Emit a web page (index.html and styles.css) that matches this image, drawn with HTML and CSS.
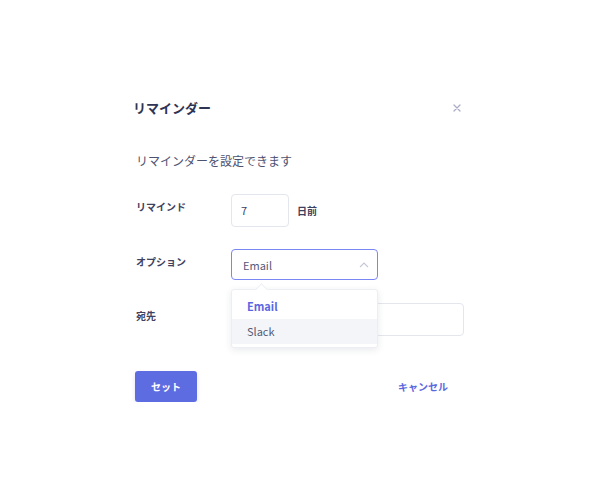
FILE: index.html
```html
<!DOCTYPE html>
<html lang="ja">
<head>
  <meta charset="UTF-8">
  <title>リマインダー</title>
  <link rel="stylesheet" href="styles.css">
</head>
<body>
  <div class="dialog">
    <div class="dialog-head">
      <h2 class="dialog-title">リマインダー</h2>
      <span class="close">
        <svg width="8" height="8" viewBox="0 0 8 8"><path d="M1 1L7 7M7 1L1 7" stroke="#a9adc8" stroke-width="1.3" stroke-linecap="round"/></svg>
      </span>
    </div>
    <p class="lead">リマインダーを設定できます</p>

    <div class="row row-first">
      <label class="label">リマインド</label>
      <div class="field">
        <div class="input input-days">7</div>
        <span class="unit">日前</span>
      </div>
    </div>

    <div class="row">
      <label class="label">オプション</label>
      <div class="field field-select">
        <div class="select">
          <span>Email</span>
          <svg width="10" height="6" viewBox="0 0 10 6"><path d="M1 5L5 1L9 5" fill="none" stroke="#c5c8d8" stroke-width="1.1"/></svg>
        </div>
        <div class="menu">
          <div class="menu-item active">Email</div>
          <div class="menu-item hover">Slack</div>
        </div>
      </div>
    </div>

    <div class="row row-last">
      <label class="label">宛先</label>
      <div class="field">
        <div class="input input-wide"></div>
      </div>
    </div>

    <div class="dialog-foot">
      <button class="btn-primary">セット</button>
      <button class="btn-link">キャンセル</button>
    </div>
  </div>
</body>
</html>
```

FILE: styles.css
```css
body {
  margin: 0;
  background: #ffffff;
  font-family: "Noto Sans CJK JP", "Noto Sans", sans-serif;
  color: #3b3f5c;
}
.dialog {
  width: 331px;
  margin-left: 133px;
  padding-top: 99px;
}
.dialog-head {
  display: flex;
  justify-content: space-between;
  align-items: center;
  height: 18px;
}
.dialog-title {
  margin: 0;
  font-size: 13px;
  line-height: 18px;
  font-weight: 700;
  color: #2f3454;
}
.close {
  display: flex;
  margin-right: 3px;
}
.lead {
  margin: 35px 0 0 3px;
  font-size: 12px;
  line-height: 18px;
  color: #4d5270;
}
.row {
  display: grid;
  grid-template-columns: 95px 1fr;
  margin-left: 3px;
  margin-top: 22px;
}
.row-first {
  margin-top: 24px;
}
.row-last {
  margin-top: 23px;
}
.label {
  font-size: 10px;
  line-height: 16px;
  font-weight: 700;
  color: #3e4260;
  padding-top: 5px;
}
.field {
  display: flex;
  align-items: center;
  gap: 8px;
}
.field-select {
  position: relative;
}
.input {
  box-sizing: border-box;
  height: 33px;
  border: 1px solid #e4e6ee;
  border-radius: 4px;
  background: #fff;
  font-size: 11px;
  line-height: 31px;
  padding-left: 9px;
  color: #3b3f5c;
}
.input-days {
  width: 58px;
}
.input-wide {
  width: 233px;
}
.unit {
  font-size: 10px;
  font-weight: 700;
  color: #3e4260;
}
.select {
  box-sizing: border-box;
  width: 147px;
  height: 31px;
  border: 1px solid #7a86f4;
  border-radius: 4px;
  display: flex;
  justify-content: space-between;
  align-items: center;
  padding: 0 8px 0 11px;
  font-size: 11px;
  color: #555a76;
}
.menu {
  position: absolute;
  top: 40px;
  left: 0;
  z-index: 2;
  box-sizing: border-box;
  width: 147px;
  padding: 4px 0 3px;
  background: #fff;
  border: 1px solid #eceef4;
  border-radius: 3px;
  box-shadow: 0 2px 7px rgba(40, 45, 80, 0.1);
}
.menu::before {
  content: "";
  position: absolute;
  top: -5px;
  left: 25px;
  width: 8px;
  height: 8px;
  background: #fff;
  border-left: 1px solid #eceef4;
  border-top: 1px solid #eceef4;
  transform: rotate(45deg);
}
.menu-item {
  height: 25px;
  line-height: 25px;
  padding-left: 15px;
  font-size: 11px;
  color: #555a76;
}
.menu-item.active {
  color: #5b67e0;
  font-weight: 700;
}
.menu-item.hover {
  background: #f4f5f8;
}
.dialog-foot {
  display: flex;
  justify-content: space-between;
  align-items: center;
  margin: 35px 0 0 2px;
}
.btn-primary {
  width: 62px;
  height: 31px;
  border: none;
  border-radius: 3px;
  background: #5e6ce2;
  color: #fff;
  font-family: inherit;
  font-size: 10px;
  font-weight: 700;
  box-shadow: 0 2px 4px rgba(94, 108, 226, 0.2);
}
.btn-link {
  border: none;
  background: none;
  padding: 0 16px;
  font-family: inherit;
  font-size: 10px;
  font-weight: 700;
  color: #5b67e0;
}
```
